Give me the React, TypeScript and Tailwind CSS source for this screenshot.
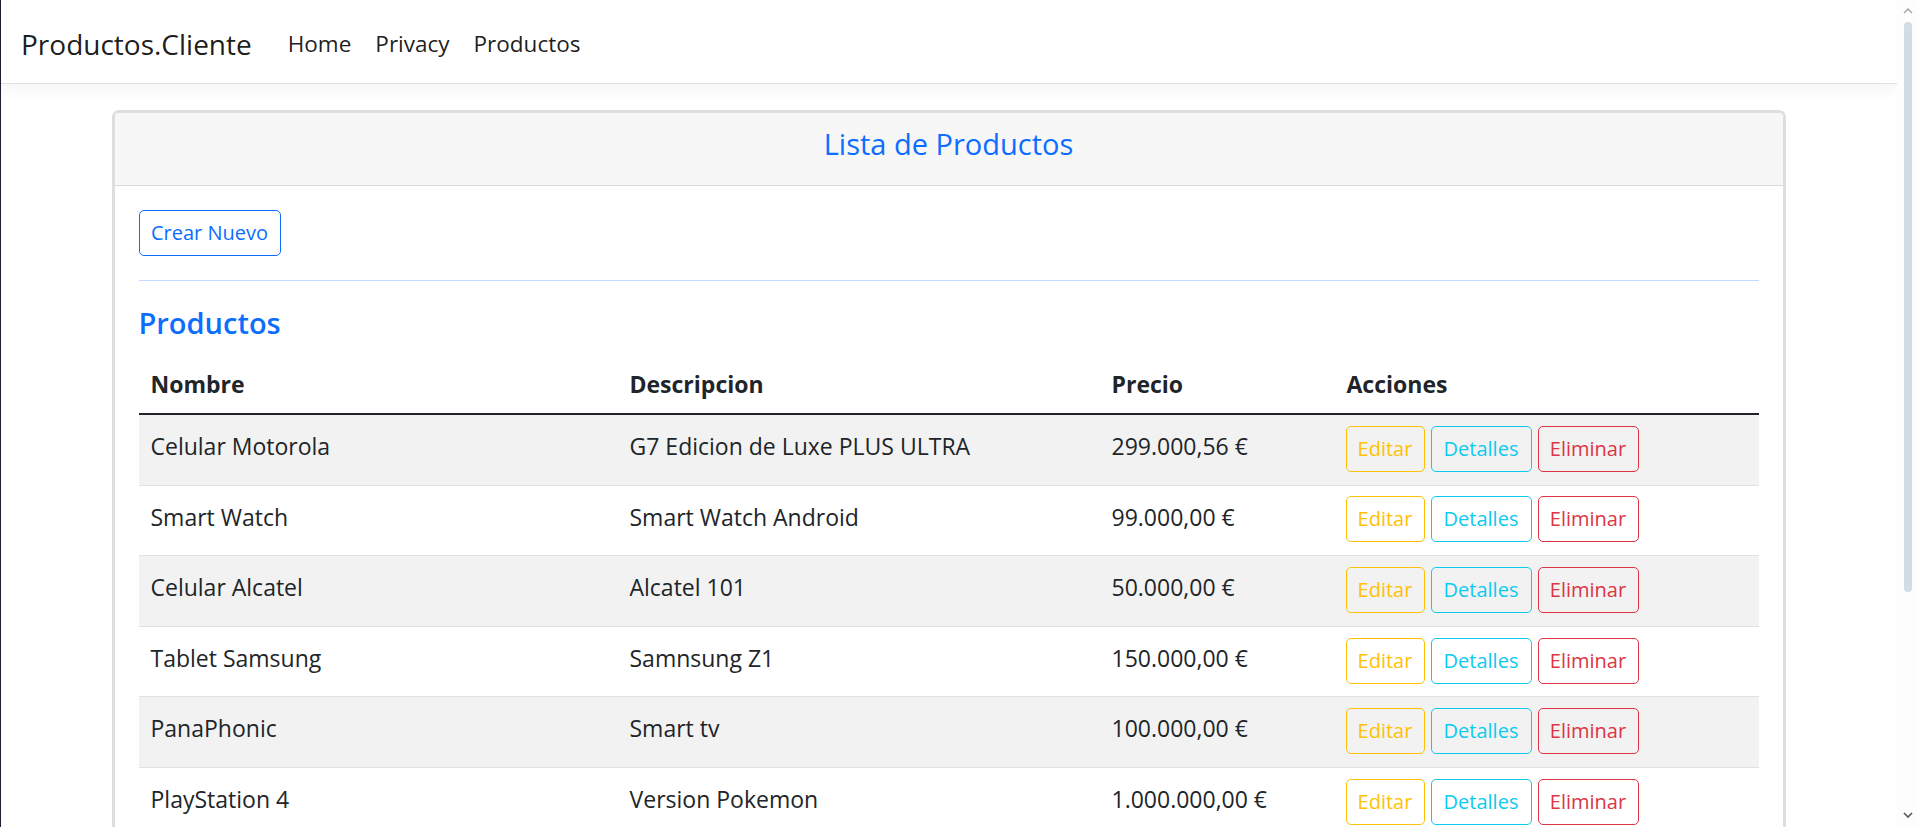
import React from 'react';

const productos = [
  { nombre: 'Celular Motorola', descripcion: 'G7 Edicion de Luxe PLUS ULTRA', precio: '299.000,56 €' },
  { nombre: 'Smart Watch', descripcion: 'Smart Watch Android', precio: '99.000,00 €' },
  { nombre: 'Celular Alcatel', descripcion: 'Alcatel 101', precio: '50.000,00 €' },
  { nombre: 'Tablet Samsung', descripcion: 'Samnsung Z1', precio: '150.000,00 €' },
  { nombre: 'PanaPhonic', descripcion: 'Smart tv', precio: '100.000,00 €' },
  { nombre: 'PlayStation 4', descripcion: 'Version Pokemon', precio: '1.000.000,00 €' },
];

const cols = 'grid grid-cols-[479px_482px_235px_422px]';

const Navbar = () => (
  <nav className="h-[84px] shrink-0 flex items-center bg-white border-b border-[#dee2e6] shadow-[0_5px_15px_rgba(0,0,0,0.05)] pl-[20px] pt-[4px]">
    <a className="text-[28px] text-[rgba(0,0,0,0.9)] leading-none mr-[24px]">Productos.Cliente</a>
    <ul className="flex items-center text-[22.5px] text-[rgba(0,0,0,0.9)]">
      <li className="px-[12px]">Home</li>
      <li className="px-[12px]">Privacy</li>
      <li className="px-[12px]">Productos</li>
    </ul>
  </nav>
);

const Scrollbar = () => (
  <div className="w-[20px] shrink-0 h-full bg-[#fdfdfd] flex flex-col items-center">
    <svg className="mt-[8px] ml-[1px]" width="10" height="6" viewBox="0 0 10 6">
      <path d="M1 5 L5 1 L9 5" fill="none" stroke="#a3a3a3" strokeWidth="1.4" />
    </svg>
    <div className="mt-[8px] ml-[2px] w-[8px] h-[570px] rounded-full bg-[#d1dce6]" />
    <div className="flex-1" />
    <svg className="mb-[9px] ml-[1px]" width="10" height="6" viewBox="0 0 10 6">
      <path d="M1 1 L5 5 L9 1" fill="none" stroke="#555" strokeWidth="1.6" />
    </svg>
  </div>
);

const ActionButton = ({ label, tone, width }: { label: string; tone: string; width: string }) => (
  <button className={`h-[46px] ${width} rounded-[5px] border text-[20px] leading-none ${tone}`}>{label}</button>
);

export default function App() {
  return (
    <div className="w-[1917px] h-[827px] flex overflow-hidden bg-white font-['Segoe_UI','Open_Sans',sans-serif] text-[#212529]">
      <div className="w-[1897px] h-full flex flex-col border-l border-[#1c2036]">
        <Navbar />
        <main className="flex justify-center pr-[1px]">
          <section className="mt-[26px] w-[1674px] h-[900px] border-[3px] border-[#dedede] rounded-[7px] flex flex-col">
            <header className="h-[73px] bg-[#f7f7f7] border-b border-[#d9d9d9] flex items-center justify-center rounded-t-[4px]">
              <h5 className="text-[29px] text-[#0d6efd] font-medium pb-[10px]">Lista de Productos</h5>
            </header>
            <div className="px-[24px] pt-[24px]">
              <button className="h-[46px] w-[142px] rounded-[5px] border border-[#0d6efd] text-[#0d6efd] text-[20px] leading-none">
                Crear Nuevo
              </button>
              <hr className="mt-[24px] mb-[24px] border-0 border-t border-[#c3dafe]" />
              <h4 className="text-[29px] leading-[36px] text-[#0d6efd] font-semibold">Productos</h4>
              <div className="mt-[23px]">
                <div className={`${cols} h-[51px] border-b-2 border-[#212529] font-bold text-[23px]`}>
                  <div className="px-[12px] flex items-center pb-[9px]">Nombre</div>
                  <div className="px-[12px] flex items-center pb-[9px]">Descripcion</div>
                  <div className="px-[12px] flex items-center pb-[9px]">Precio</div>
                  <div className="px-[12px] flex items-center pb-[9px]">Acciones</div>
                </div>
                {productos.map((p, i) => (
                  <div
                    key={p.nombre}
                    className={`${cols} h-[70.6px] border-b border-[#dee2e6] text-[23px] ${i % 2 === 0 ? 'bg-[#f2f2f2]' : 'bg-white'}`}
                  >
                    <div className="px-[12px] flex items-center pb-[7px]">{p.nombre}</div>
                    <div className="px-[12px] flex items-center pb-[7px]">{p.descripcion}</div>
                    <div className="px-[12px] flex items-center pb-[7px]">{p.precio}</div>
                    <div className="pl-[11px] flex items-center gap-[6px] pb-[2px]">
                      <ActionButton label="Editar" tone="border-[#ffc107] text-[#ffc107]" width="w-[79px]" />
                      <ActionButton label="Detalles" tone="border-[#0dcaf0] text-[#0dcaf0]" width="w-[101px]" />
                      <ActionButton label="Eliminar" tone="border-[#dc3545] text-[#dc3545]" width="w-[101px]" />
                    </div>
                  </div>
                ))}
              </div>
            </div>
          </section>
        </main>
      </div>
      <Scrollbar />
    </div>
  );
}
